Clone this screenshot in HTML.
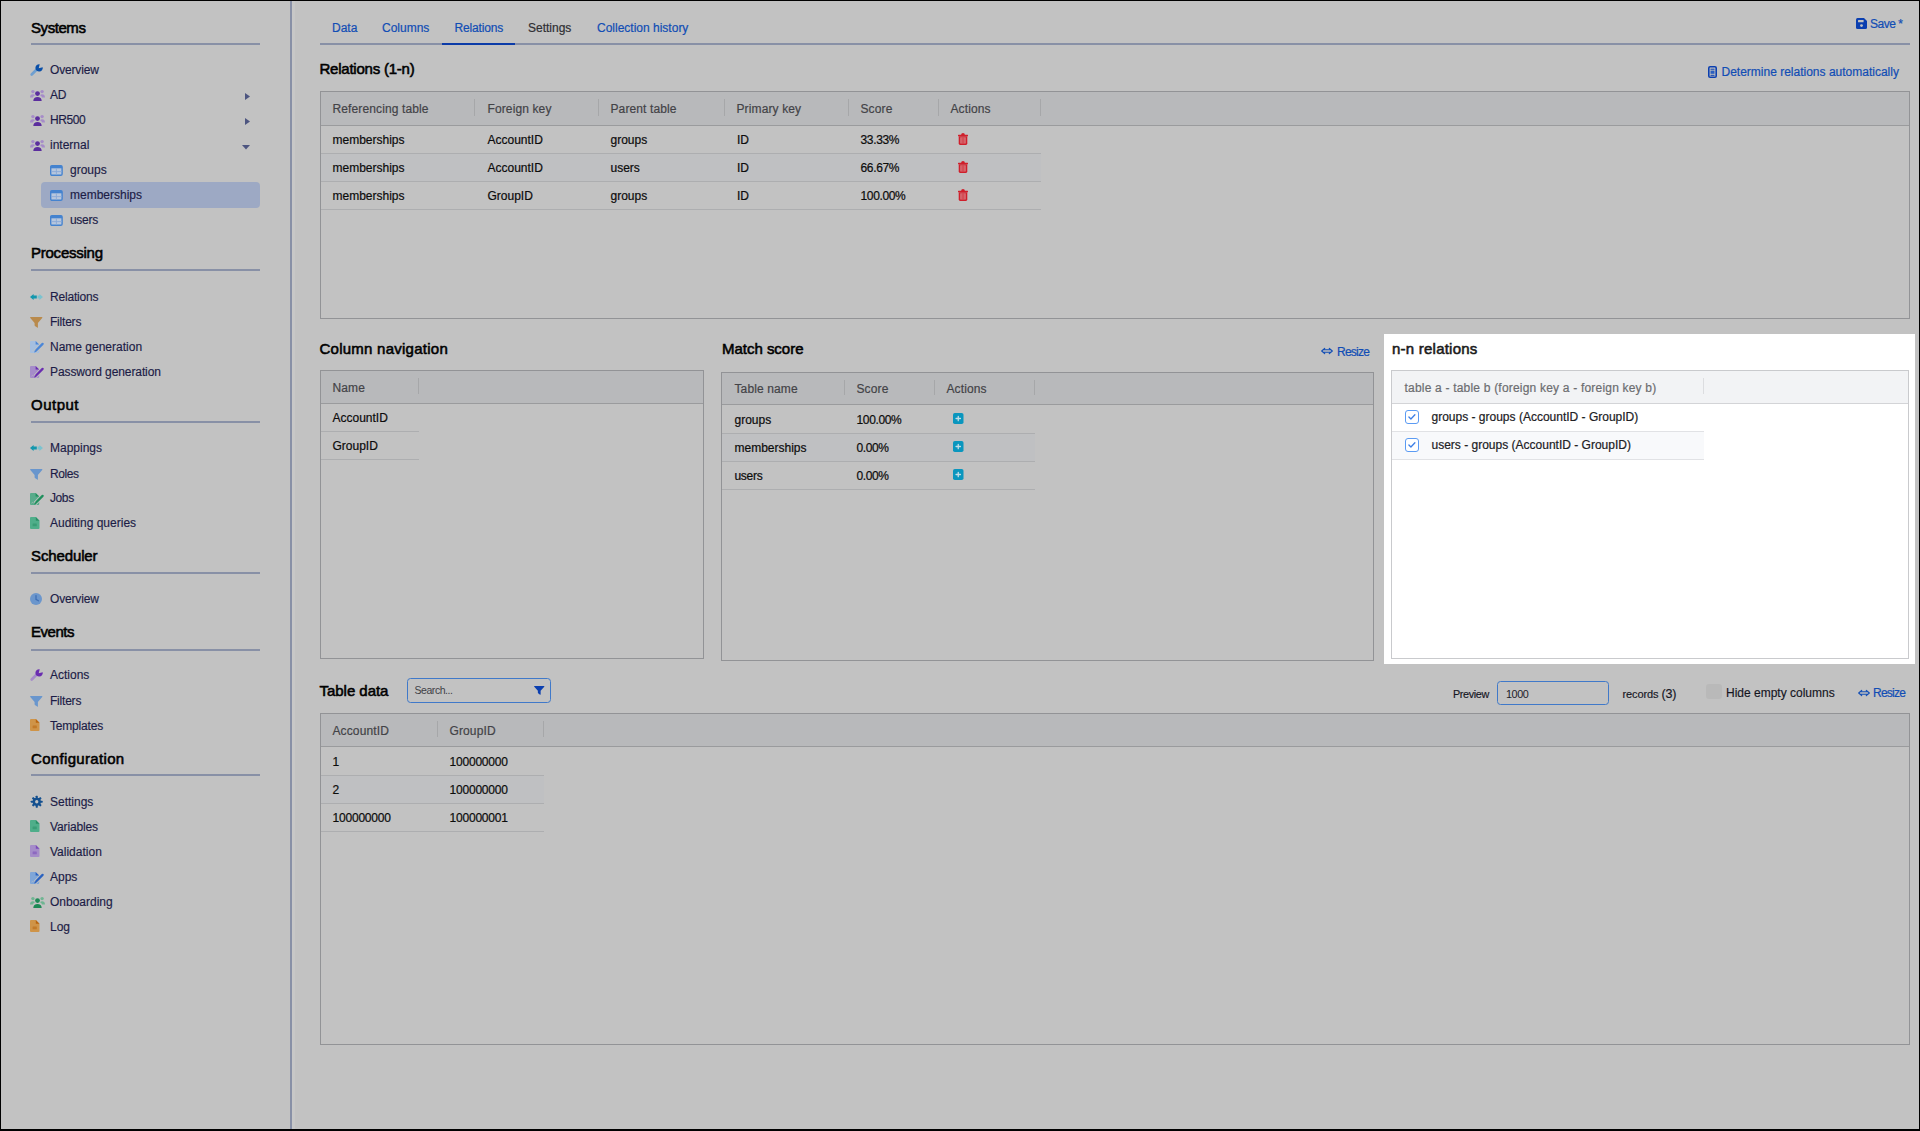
<!DOCTYPE html>
<html lang="en">
<head>
<meta charset="utf-8">
<title>memberships - Relations</title>
<style>
*{box-sizing:border-box}
html,body{margin:0;padding:0}
body{width:1920px;height:1131px;overflow:hidden;position:relative;background:#c2c2c2;font-family:"Liberation Sans",sans-serif;font-size:12px;color:#0c0c0c}
svg{display:block;overflow:visible}
.frame{position:absolute;left:0;top:0;width:1920px;height:1131px;border:1px solid #000;border-bottom-width:2px;z-index:20;pointer-events:none}
/* ---------- sidebar ---------- */
.side{position:absolute;left:0;top:0;width:292px;height:1131px;border-right:2px solid #8890a6}
.side h2{position:absolute;left:31px;margin:0;font-size:15px;font-weight:400;-webkit-text-stroke:.55px;color:#000;line-height:18px;white-space:nowrap}
.split{position:absolute;left:292px;top:1px;width:3px;height:1128px;background:#c7c7c7}
.side hr{position:absolute;left:31px;width:229px;height:2px;border:0;margin:0;background:#8890a6}
.nav{position:absolute;left:31px;width:229px;height:25px;line-height:25px;color:#1c1c46;white-space:nowrap;-webkit-text-stroke:.15px}
.nav .ic{position:absolute;left:0;top:0}
.nav .tx{position:absolute;left:19px;top:0}
.nav.sub{left:41px;width:219px}
.nav.sub .tx{left:29px}
.nav.sel{background:#9da9c4;border-radius:4px;height:26px;line-height:27px}
.nav .car{position:absolute}
/* ---------- main ---------- */
.tabs{position:absolute;left:320px;top:0;width:1590px;height:45px;border-bottom:2px solid #8890a6}
.tab{position:absolute;top:16px;height:29px;line-height:25px;color:#114db5;white-space:nowrap;-webkit-text-stroke:.2px}
.tab.act{border-bottom:2px solid #0b3ba8}
.tab.plain{color:#2f2f33}
.link{position:absolute;color:#114db5;white-space:nowrap;line-height:16px;-webkit-text-stroke:.2px}
.lbl{position:absolute;color:#15151f;white-space:nowrap;line-height:16px;-webkit-text-stroke:.15px}
h3{position:absolute;margin:0;font-size:15px;font-weight:400;-webkit-text-stroke:.55px;color:#000;line-height:18px;white-space:nowrap}
.grid{position:absolute;border:1px solid #929396;background:#c2c2c2}
.grid .hd{position:absolute;left:0;top:0;right:0;background:#b8b9bb;border-bottom:1px solid #9a9b9d}
.grid .th{position:absolute;top:0;height:100%;-webkit-text-stroke:.2px;color:#434347;white-space:nowrap;padding-left:11.5px;letter-spacing:.12px}
.grid .th:after{content:"";position:absolute;right:0;top:7px;bottom:9px;width:1px;background:#a6a7a9}
.row{position:absolute;left:0;height:28px;border-bottom:1px solid #adaeb0}
.row.alt{background:#bfc0c2}
.td{position:absolute;top:0;height:27px;line-height:29px;padding-left:11.5px;white-space:nowrap;color:#0c0c0c;-webkit-text-stroke:.2px}
.td .ic{position:absolute}
.inp{position:absolute;border:1.3px solid #4079c9;border-radius:3.5px;color:#1c1c28;white-space:nowrap}
/* highlighted panel */
.hl{position:absolute;left:1384px;top:334px;width:531px;height:330px;background:#fff}
.hl .grid{border-color:#c9cacd;background:#fff}
.hl .grid .hd{background:#f2f3f5;border-bottom-color:#d3d4d7}
.hl .grid .th{color:#6c6d70}
.hl .grid .th:after{background:#dcdde0}
.hl .row{border-bottom-color:#e1e2e5}
.hl .row.alt{background:#f8f9fb}
.hl .td{color:#202024;line-height:27px}
.cb{position:absolute;left:13px;top:6px;width:14px;height:14px;border:1.4px solid #5b9bf3;border-radius:3px;background:#fff}
</style>
</head>
<body>
<nav class="side">
  <h2 style="top:19px;letter-spacing:-0.43px">Systems</h2><hr style="top:43px">
  <div class="nav" style="top:58px"><svg class="ic" width="13" height="12" viewBox="0 0 13 12" style="left:-1px;top:6px" aria-hidden="true"><path d="M1.7 10.5 L7.2 5" stroke="#6f9fd0" stroke-width="2.7" stroke-linecap="round" fill="none"/><path d="M8.7 4.3 L12.75 3.3 A3.7 3.7 0 1 1 9.7 .25 Z" fill="#0a4fa8"/></svg><span class="tx" style="letter-spacing:-0.16px">Overview</span></div>
  <div class="nav" style="top:83px"><svg class="ic" width="15" height="12" viewBox="0 0 15 12" style="left:-1px;top:6px" aria-hidden="true"><circle cx="2.9" cy="2.6" r="1.7" fill="#a68cc9"/><circle cx="12.1" cy="2.6" r="1.7" fill="#a68cc9"/><path d="M0 8.4C0 6.4 1.2 5.3 2.9 5.3C3.9 5.3 4.6 5.6 5 6.2C3.9 6.8 3.2 7.6 3 8.4Z" fill="#a68cc9"/><path d="M15 8.4C15 6.4 13.8 5.3 12.1 5.3C11.1 5.3 10.4 5.6 10 6.2C11.1 6.8 11.8 7.6 12 8.4Z" fill="#a68cc9"/><circle cx="7.5" cy="4.6" r="2.4" fill="#5b2d9e"/><path d="M3.3 12C3.3 9.4 5 8 7.5 8C10 8 11.7 9.4 11.7 12Z" fill="#5b2d9e"/></svg><span class="tx" style="letter-spacing:-0.26px">AD</span><svg class="car" width="5" height="7" viewBox="0 0 5 7" style="left:214px;top:10px" aria-hidden="true"><path d="M0 0L5 3.5L0 7Z" fill="#4d5580"/></svg></div>
  <div class="nav" style="top:108px"><svg class="ic" width="15" height="12" viewBox="0 0 15 12" style="left:-1px;top:6px" aria-hidden="true"><circle cx="2.9" cy="2.6" r="1.7" fill="#a68cc9"/><circle cx="12.1" cy="2.6" r="1.7" fill="#a68cc9"/><path d="M0 8.4C0 6.4 1.2 5.3 2.9 5.3C3.9 5.3 4.6 5.6 5 6.2C3.9 6.8 3.2 7.6 3 8.4Z" fill="#a68cc9"/><path d="M15 8.4C15 6.4 13.8 5.3 12.1 5.3C11.1 5.3 10.4 5.6 10 6.2C11.1 6.8 11.8 7.6 12 8.4Z" fill="#a68cc9"/><circle cx="7.5" cy="4.6" r="2.4" fill="#5b2d9e"/><path d="M3.3 12C3.3 9.4 5 8 7.5 8C10 8 11.7 9.4 11.7 12Z" fill="#5b2d9e"/></svg><span class="tx" style="letter-spacing:-0.4px">HR500</span><svg class="car" width="5" height="7" viewBox="0 0 5 7" style="left:214px;top:10px" aria-hidden="true"><path d="M0 0L5 3.5L0 7Z" fill="#4d5580"/></svg></div>
  <div class="nav" style="top:133px"><svg class="ic" width="15" height="12" viewBox="0 0 15 12" style="left:-1px;top:6px" aria-hidden="true"><circle cx="2.9" cy="2.6" r="1.7" fill="#a68cc9"/><circle cx="12.1" cy="2.6" r="1.7" fill="#a68cc9"/><path d="M0 8.4C0 6.4 1.2 5.3 2.9 5.3C3.9 5.3 4.6 5.6 5 6.2C3.9 6.8 3.2 7.6 3 8.4Z" fill="#a68cc9"/><path d="M15 8.4C15 6.4 13.8 5.3 12.1 5.3C11.1 5.3 10.4 5.6 10 6.2C11.1 6.8 11.8 7.6 12 8.4Z" fill="#a68cc9"/><circle cx="7.5" cy="4.6" r="2.4" fill="#5b2d9e"/><path d="M3.3 12C3.3 9.4 5 8 7.5 8C10 8 11.7 9.4 11.7 12Z" fill="#5b2d9e"/></svg><span class="tx">internal</span><svg class="car" width="8" height="4.5" viewBox="0 0 8 4.5" style="left:211px;top:11.5px" aria-hidden="true"><path d="M0 0H8L4 4.5Z" fill="#4d5580"/></svg></div>
  <div class="nav sub" style="top:158px"><svg class="ic" width="12.8" height="11" viewBox="0 0 12.8 11" style="left:9.2px;top:6.7px" aria-hidden="true"><rect x=".7" y=".7" width="11.4" height="9.6" rx="1.3" fill="#b7c7dd" stroke="#4583cf" stroke-width="1.4"/><rect x=".7" y=".7" width="11.4" height="2.6" fill="#4583cf"/><path d="M6.4 3.2V10M1 6.6H11.8" stroke="#8aa9d6" stroke-width=".9" fill="none"/></svg><span class="tx">groups</span></div>
  <div class="nav sub sel" style="top:182px"><svg class="ic" width="12.8" height="11" viewBox="0 0 12.8 11" style="left:9.2px;top:7.7px" aria-hidden="true"><rect x=".7" y=".7" width="11.4" height="9.6" rx="1.3" fill="#b7c7dd" stroke="#4583cf" stroke-width="1.4"/><rect x=".7" y=".7" width="11.4" height="2.6" fill="#4583cf"/><path d="M6.4 3.2V10M1 6.6H11.8" stroke="#8aa9d6" stroke-width=".9" fill="none"/></svg><span class="tx">memberships</span></div>
  <div class="nav sub" style="top:208px"><svg class="ic" width="12.8" height="11" viewBox="0 0 12.8 11" style="left:9.2px;top:6.7px" aria-hidden="true"><rect x=".7" y=".7" width="11.4" height="9.6" rx="1.3" fill="#b7c7dd" stroke="#4583cf" stroke-width="1.4"/><rect x=".7" y=".7" width="11.4" height="2.6" fill="#4583cf"/><path d="M6.4 3.2V10M1 6.6H11.8" stroke="#8aa9d6" stroke-width=".9" fill="none"/></svg><span class="tx" style="letter-spacing:-0.3px">users</span></div>
  <h2 style="top:244px;letter-spacing:-0.24px">Processing</h2><hr style="top:269px">
  <div class="nav" style="top:285px"><svg class="ic" width="13" height="6" viewBox="0 0 13 6" style="left:-1px;top:8.5px" aria-hidden="true"><path d="M0 3L3.6 0V1.6H6.8V4.4H3.6V6Z" fill="#1397ad"/><path d="M13 3L9.4 0V1.6H7.5V4.4H9.4V6Z" fill="#7cc3cf"/></svg><span class="tx" style="letter-spacing:-0.19px">Relations</span></div>
  <div class="nav" style="top:310px"><svg class="ic" width="12.5" height="11" viewBox="0 0 12.5 11" style="left:-1px;top:6.5px" aria-hidden="true"><path d="M.7 0H11.8Q12.9 0 12.2 .9L7.9 5.9V10.2Q7.9 11.1 7.2 10.6L4.9 8.9Q4.6 8.7 4.6 8.3V5.9L.3 .9Q-.4 0 .7 0Z" fill="#b98a4c"/></svg><span class="tx" style="letter-spacing:-0.21px">Filters</span></div>
  <div class="nav" style="top:335px"><svg class="ic" width="14" height="12" viewBox="0 0 14 12" style="left:-1px;top:5.5px" aria-hidden="true"><path d="M0 1Q0 0 1 0H5.6L9.2 3.6V11Q9.2 12 8.2 12H1Q0 12 0 11Z" fill="#a5bfe0"/><path d="M5.6 0L9.2 3.6H5.6Z" fill="#4a86d8"/><path d="M4.9 10.6L12.5 3" stroke="#c2c2c2" stroke-width="4" fill="none"/><path d="M6.3 9.2L12.6 2.9" stroke="#4a86d8" stroke-width="2.3" stroke-linecap="round" fill="none"/><path d="M4.2 11.4L4.9 8.9L6.7 10.7Z" fill="#4a86d8"/><path d="M1.5 10.2Q2.4 8.6 3.3 10.2" stroke="#c2c2c2" stroke-width=".8" fill="none" opacity=".7"/></svg><span class="tx">Name generation</span></div>
  <div class="nav" style="top:360px"><svg class="ic" width="14" height="12" viewBox="0 0 14 12" style="left:-1px;top:5.5px" aria-hidden="true"><path d="M0 1Q0 0 1 0H5.6L9.2 3.6V11Q9.2 12 8.2 12H1Q0 12 0 11Z" fill="#a58cc9"/><path d="M5.6 0L9.2 3.6H5.6Z" fill="#6a2db0"/><path d="M4.9 10.6L12.5 3" stroke="#c2c2c2" stroke-width="4" fill="none"/><path d="M6.3 9.2L12.6 2.9" stroke="#6a2db0" stroke-width="2.3" stroke-linecap="round" fill="none"/><path d="M4.2 11.4L4.9 8.9L6.7 10.7Z" fill="#6a2db0"/><path d="M1.5 10.2Q2.4 8.6 3.3 10.2" stroke="#c2c2c2" stroke-width=".8" fill="none" opacity=".7"/></svg><span class="tx" style="letter-spacing:-0.1px">Password generation</span></div>
  <h2 style="top:396px;letter-spacing:0.49px">Output</h2><hr style="top:421px">
  <div class="nav" style="top:436px"><svg class="ic" width="13" height="6" viewBox="0 0 13 6" style="left:-1px;top:8.5px" aria-hidden="true"><path d="M0 3L3.6 0V1.6H6.8V4.4H3.6V6Z" fill="#1397ad"/><path d="M13 3L9.4 0V1.6H7.5V4.4H9.4V6Z" fill="#7cc3cf"/></svg><span class="tx">Mappings</span></div>
  <div class="nav" style="top:462px"><svg class="ic" width="12.5" height="11" viewBox="0 0 12.5 11" style="left:-1px;top:6.5px" aria-hidden="true"><path d="M.7 0H11.8Q12.9 0 12.2 .9L7.9 5.9V10.2Q7.9 11.1 7.2 10.6L4.9 8.9Q4.6 8.7 4.6 8.3V5.9L.3 .9Q-.4 0 .7 0Z" fill="#6996cd"/></svg><span class="tx" style="letter-spacing:-0.4px">Roles</span></div>
  <div class="nav" style="top:486px"><svg class="ic" width="14" height="12" viewBox="0 0 14 12" style="left:-1px;top:6.5px" aria-hidden="true"><path d="M0 1Q0 0 1 0H5.6L9.2 3.6V11Q9.2 12 8.2 12H1Q0 12 0 11Z" fill="#58ab8b"/><path d="M5.6 0L9.2 3.6H5.6Z" fill="#1e8f5c"/><path d="M4.9 10.6L12.5 3" stroke="#c2c2c2" stroke-width="4" fill="none"/><path d="M6.3 9.2L12.6 2.9" stroke="#1e8f5c" stroke-width="2.3" stroke-linecap="round" fill="none"/><path d="M4.2 11.4L4.9 8.9L6.7 10.7Z" fill="#1e8f5c"/><path d="M1.5 10.2Q2.4 8.6 3.3 10.2" stroke="#c2c2c2" stroke-width=".8" fill="none" opacity=".7"/></svg><span class="tx" style="letter-spacing:-0.4px">Jobs</span></div>
  <div class="nav" style="top:511px"><svg class="ic" width="9.5" height="12" viewBox="0 0 9.5 12" style="left:-1px;top:6px" aria-hidden="true"><path d="M0 1Q0 0 1 0H5.8L9.5 3.7V11Q9.5 12 8.5 12H1Q0 12 0 11Z" fill="#4fae8a"/><path d="M5.8 0L9.5 3.7H5.8Z" fill="#2a8f66"/><rect x="2.6" y="6.4" width="4.2" height="2.8" rx=".5" fill="#2a8f66" opacity=".55"/></svg><span class="tx">Auditing queries</span></div>
  <h2 style="top:547px;letter-spacing:-0.12px">Scheduler</h2><hr style="top:572px">
  <div class="nav" style="top:587px"><svg class="ic" width="12" height="12" viewBox="0 0 12 12" style="left:-1px;top:5.5px" aria-hidden="true"><circle cx="6" cy="6" r="6" fill="#6b96cc"/><path d="M6 2.6V6.3L8.4 7.8" stroke="#3f6fb5" stroke-width="1.3" fill="none" stroke-linecap="round"/></svg><span class="tx" style="letter-spacing:-0.16px">Overview</span></div>
  <h2 style="top:623px;letter-spacing:-0.49px">Events</h2><hr style="top:649px">
  <div class="nav" style="top:663px"><svg class="ic" width="13" height="12" viewBox="0 0 13 12" style="left:-1px;top:6px" aria-hidden="true"><path d="M1.7 10.5 L7.2 5" stroke="#a68cc9" stroke-width="2.7" stroke-linecap="round" fill="none"/><path d="M8.7 4.3 L12.75 3.3 A3.7 3.7 0 1 1 9.7 .25 Z" fill="#6a2db0"/></svg><span class="tx">Actions</span></div>
  <div class="nav" style="top:689px"><svg class="ic" width="12.5" height="11" viewBox="0 0 12.5 11" style="left:-1px;top:6.5px" aria-hidden="true"><path d="M.7 0H11.8Q12.9 0 12.2 .9L7.9 5.9V10.2Q7.9 11.1 7.2 10.6L4.9 8.9Q4.6 8.7 4.6 8.3V5.9L.3 .9Q-.4 0 .7 0Z" fill="#6996cd"/></svg><span class="tx" style="letter-spacing:-0.21px">Filters</span></div>
  <div class="nav" style="top:714px"><svg class="ic" width="9.5" height="12" viewBox="0 0 9.5 12" style="left:-1px;top:5px" aria-hidden="true"><path d="M0 1Q0 0 1 0H5.8L9.5 3.7V11Q9.5 12 8.5 12H1Q0 12 0 11Z" fill="#cf9448"/><path d="M5.8 0L9.5 3.7H5.8Z" fill="#b8650f"/><rect x="2.6" y="6.4" width="4.2" height="2.8" rx=".5" fill="#b8650f" opacity=".55"/></svg><span class="tx" style="letter-spacing:-0.19px">Templates</span></div>
  <h2 style="top:750px;letter-spacing:0.33px">Configuration</h2><hr style="top:774px">
  <div class="nav" style="top:790px"><svg class="ic" width="11.5" height="11.5" viewBox="0 0 12 12" style="left:-.5px;top:5.5px" aria-hidden="true"><rect x="4.9" y="-.2" width="2.2" height="3" rx=".5" fill="#14508f" transform="rotate(0 6 6)"/><rect x="4.9" y="-.2" width="2.2" height="3" rx=".5" fill="#14508f" transform="rotate(45 6 6)"/><rect x="4.9" y="-.2" width="2.2" height="3" rx=".5" fill="#14508f" transform="rotate(90 6 6)"/><rect x="4.9" y="-.2" width="2.2" height="3" rx=".5" fill="#14508f" transform="rotate(135 6 6)"/><rect x="4.9" y="-.2" width="2.2" height="3" rx=".5" fill="#14508f" transform="rotate(180 6 6)"/><rect x="4.9" y="-.2" width="2.2" height="3" rx=".5" fill="#14508f" transform="rotate(225 6 6)"/><rect x="4.9" y="-.2" width="2.2" height="3" rx=".5" fill="#14508f" transform="rotate(270 6 6)"/><rect x="4.9" y="-.2" width="2.2" height="3" rx=".5" fill="#14508f" transform="rotate(315 6 6)"/><circle cx="6" cy="6" r="4.3" fill="#14508f"/><circle cx="6" cy="6" r="1.7" fill="#c2c2c2"/></svg><span class="tx">Settings</span></div>
  <div class="nav" style="top:815px"><svg class="ic" width="9.5" height="12" viewBox="0 0 9.5 12" style="left:-1px;top:5px" aria-hidden="true"><path d="M0 1Q0 0 1 0H5.8L9.5 3.7V11Q9.5 12 8.5 12H1Q0 12 0 11Z" fill="#4fae8a"/><path d="M5.8 0L9.5 3.7H5.8Z" fill="#2a8f66"/><rect x="2.6" y="6.4" width="4.2" height="2.8" rx=".5" fill="#2a8f66" opacity=".55"/></svg><span class="tx" style="letter-spacing:-0.13px">Variables</span></div>
  <div class="nav" style="top:840px"><svg class="ic" width="9.5" height="12" viewBox="0 0 9.5 12" style="left:-1px;top:5px" aria-hidden="true"><path d="M0 1Q0 0 1 0H5.8L9.5 3.7V11Q9.5 12 8.5 12H1Q0 12 0 11Z" fill="#a58cc9"/><path d="M5.8 0L9.5 3.7H5.8Z" fill="#7a4bb8"/><rect x="2.6" y="6.4" width="4.2" height="2.8" rx=".5" fill="#7a4bb8" opacity=".55"/></svg><span class="tx">Validation</span></div>
  <div class="nav" style="top:865px"><svg class="ic" width="14" height="12" viewBox="0 0 14 12" style="left:-1px;top:6.5px" aria-hidden="true"><path d="M0 1Q0 0 1 0H5.6L9.2 3.6V11Q9.2 12 8.2 12H1Q0 12 0 11Z" fill="#7fa6d8"/><path d="M5.6 0L9.2 3.6H5.6Z" fill="#2a62c0"/><path d="M4.9 10.6L12.5 3" stroke="#c2c2c2" stroke-width="4" fill="none"/><path d="M6.3 9.2L12.6 2.9" stroke="#2a62c0" stroke-width="2.3" stroke-linecap="round" fill="none"/><path d="M4.2 11.4L4.9 8.9L6.7 10.7Z" fill="#2a62c0"/><path d="M1.5 10.2Q2.4 8.6 3.3 10.2" stroke="#c2c2c2" stroke-width=".8" fill="none" opacity=".7"/></svg><span class="tx">Apps</span></div>
  <div class="nav" style="top:890px"><svg class="ic" width="15" height="12" viewBox="0 0 15 12" style="left:-1px;top:6px" aria-hidden="true"><circle cx="2.9" cy="2.6" r="1.7" fill="#6fb592"/><circle cx="12.1" cy="2.6" r="1.7" fill="#6fb592"/><path d="M0 8.4C0 6.4 1.2 5.3 2.9 5.3C3.9 5.3 4.6 5.6 5 6.2C3.9 6.8 3.2 7.6 3 8.4Z" fill="#6fb592"/><path d="M15 8.4C15 6.4 13.8 5.3 12.1 5.3C11.1 5.3 10.4 5.6 10 6.2C11.1 6.8 11.8 7.6 12 8.4Z" fill="#6fb592"/><circle cx="7.5" cy="4.6" r="2.4" fill="#1d8a56"/><path d="M3.3 12C3.3 9.4 5 8 7.5 8C10 8 11.7 9.4 11.7 12Z" fill="#1d8a56"/></svg><span class="tx">Onboarding</span></div>
  <div class="nav" style="top:915px"><svg class="ic" width="9.5" height="12" viewBox="0 0 9.5 12" style="left:-1px;top:5px" aria-hidden="true"><path d="M0 1Q0 0 1 0H5.8L9.5 3.7V11Q9.5 12 8.5 12H1Q0 12 0 11Z" fill="#cf9448"/><path d="M5.8 0L9.5 3.7H5.8Z" fill="#b8650f"/><rect x="2.6" y="6.4" width="4.2" height="2.8" rx=".5" fill="#b8650f" opacity=".55"/></svg><span class="tx">Log</span></div>
</nav>
<div class="split"></div>
<main>
  <div class="tabs">
    <div class="tab" style="left:12px">Data</div>
    <div class="tab" style="left:62px">Columns</div>
    <div class="tab act" style="left:122px;width:73px;padding-left:12.5px;letter-spacing:-.15px">Relations</div>
    <div class="tab plain" style="left:208px">Settings</div>
    <div class="tab" style="left:277px">Collection history</div>
  </div>
  <svg class="ic" width="11" height="11" viewBox="0 0 11 11" style="position:absolute;left:1856px;top:18px" aria-hidden="true"><path d="M0 1.5Q0 0 1.5 0H8L11 3V9.5Q11 11 9.5 11H1.5Q0 11 0 9.5Z" fill="#0b3fb0"/><rect x="2" y="2" width="5.6" height="2.3" rx=".5" fill="#c2c2c2"/><circle cx="5.5" cy="7.6" r="1.45" fill="#c2c2c2"/></svg><div class="link" style="left:1870px;top:16px;letter-spacing:-.5px">Save *</div>
  <h3 style="left:319.5px;top:60px;letter-spacing:-.23px">Relations (1-n)</h3>
  <svg class="ic" width="9" height="12" viewBox="0 0 9 12" style="position:absolute;left:1708.3px;top:65.8px" aria-hidden="true"><rect x=".8" y=".8" width="7.4" height="10.4" rx="1.3" fill="none" stroke="#0b3fb0" stroke-width="1.6"/><rect x="2.5" y="2.7" width="4" height="1" fill="#0b3fb0"/><rect x="2.5" y="4.6" width="4" height="3.2" fill="#2a5fc0"/><rect x="2.5" y="8.8" width="4" height="1" fill="#0b3fb0"/></svg><div class="link" style="left:1721.5px;top:64px">Determine relations automatically</div>
  <section class="grid" style="left:320px;top:91px;width:1590px;height:228px">
    <div class="hd" style="height:34px;line-height:35px"><div class="th" style="left:0px;width:154px">Referencing table</div><div class="th" style="left:155px;width:123px">Foreign key</div><div class="th" style="left:278px;width:126px">Parent table</div><div class="th" style="left:404px;width:124px">Primary key</div><div class="th" style="left:528px;width:90px">Score</div><div class="th" style="left:618px;width:102px">Actions</div></div>
    <div class="row" style="top:34px;width:720px"><span class="td" style="left:0px">memberships</span><span class="td" style="left:155px">AccountID</span><span class="td" style="left:278px">groups</span><span class="td" style="left:404.5px">ID</span><span class="td" style="left:528px;letter-spacing:-0.35px">33.33%</span><span class="td" style="left:618px"><svg class="ic" width="10" height="12" viewBox="0 0 10 12" style="left:18.7px;top:6.7px" aria-hidden="true"><path d="M3.1 2Q3.1 0 5 0Q6.9 0 6.9 2Z" fill="#cf1f2b"/><rect x="0" y="1.8" width="10" height="1.5" rx=".4" fill="#cf1f2b"/><path d="M.7 3.3H9.3V10.6Q9.3 12 7.9 12H2.1Q.7 12 .7 10.6Z" fill="#cf1f2b"/><rect x="2.4" y="4.3" width="5.2" height="6.2" fill="#d98a8e"/><path d="M4.1 4.3V10.5M5.9 4.3V10.5" stroke="#cf1f2b" stroke-width=".9"/></svg></span></div>
    <div class="row alt" style="top:62px;width:720px"><span class="td" style="left:0px">memberships</span><span class="td" style="left:155px">AccountID</span><span class="td" style="left:278px">users</span><span class="td" style="left:404.5px">ID</span><span class="td" style="left:528px;letter-spacing:-0.35px">66.67%</span><span class="td" style="left:618px"><svg class="ic" width="10" height="12" viewBox="0 0 10 12" style="left:18.7px;top:6.7px" aria-hidden="true"><path d="M3.1 2Q3.1 0 5 0Q6.9 0 6.9 2Z" fill="#cf1f2b"/><rect x="0" y="1.8" width="10" height="1.5" rx=".4" fill="#cf1f2b"/><path d="M.7 3.3H9.3V10.6Q9.3 12 7.9 12H2.1Q.7 12 .7 10.6Z" fill="#cf1f2b"/><rect x="2.4" y="4.3" width="5.2" height="6.2" fill="#d98a8e"/><path d="M4.1 4.3V10.5M5.9 4.3V10.5" stroke="#cf1f2b" stroke-width=".9"/></svg></span></div>
    <div class="row" style="top:90px;width:720px"><span class="td" style="left:0px">memberships</span><span class="td" style="left:155px">GroupID</span><span class="td" style="left:278px">groups</span><span class="td" style="left:404.5px">ID</span><span class="td" style="left:528px;letter-spacing:-0.35px">100.00%</span><span class="td" style="left:618px"><svg class="ic" width="10" height="12" viewBox="0 0 10 12" style="left:18.7px;top:6.7px" aria-hidden="true"><path d="M3.1 2Q3.1 0 5 0Q6.9 0 6.9 2Z" fill="#cf1f2b"/><rect x="0" y="1.8" width="10" height="1.5" rx=".4" fill="#cf1f2b"/><path d="M.7 3.3H9.3V10.6Q9.3 12 7.9 12H2.1Q.7 12 .7 10.6Z" fill="#cf1f2b"/><rect x="2.4" y="4.3" width="5.2" height="6.2" fill="#d98a8e"/><path d="M4.1 4.3V10.5M5.9 4.3V10.5" stroke="#cf1f2b" stroke-width=".9"/></svg></span></div>
  </section>
  <h3 style="left:319.5px;top:340px;letter-spacing:.25px">Column navigation</h3>
  <section class="grid" style="left:320px;top:370px;width:384px;height:289px">
    <div class="hd" style="height:33px;line-height:34px"><div class="th" style="left:0px;width:98px">Name</div></div>
    <div class="row" style="top:33px;width:98px"><span class="td" style="left:0px">AccountID</span></div>
    <div class="row" style="top:61px;width:98px"><span class="td" style="left:0px">GroupID</span></div>
  </section>
  <h3 style="left:722px;top:340px;letter-spacing:-.02px">Match score</h3>
  <svg class="ic" width="12" height="6" viewBox="0 0 12 6" style="position:absolute;left:1321px;top:348px" aria-hidden="true"><path d="M3.7 .4L.7 3L3.7 5.6M8.3 .4L11.3 3L8.3 5.6M2.3 1.75H9.7M2.3 4.25H9.7" fill="none" stroke="#114db5" stroke-width="1.2" stroke-linejoin="round" stroke-linecap="round"/></svg><div class="link" style="left:1337px;top:343.5px;letter-spacing:-.75px">Resize</div>
  <section class="grid" style="left:721px;top:372px;width:653px;height:289px">
    <div class="hd" style="height:32px;line-height:33px"><div class="th" style="left:0px;width:123px"><span style="padding-left:1px">Table name</span></div><div class="th" style="left:123px;width:90px">Score</div><div class="th" style="left:213px;width:100px">Actions</div></div>
    <div class="row" style="top:33px;width:313px"><span class="td" style="left:1px">groups</span><span class="td" style="left:123px;letter-spacing:-0.35px">100.00%</span><span class="td" style="left:213px"><svg class="ic" width="10.5" height="11" viewBox="0 0 10.5 11" style="left:17.8px;top:7px" aria-hidden="true"><rect width="10.5" height="11" rx="1.8" fill="#0a96be"/><path d="M5.25 3.3V7.7M3.05 5.5H7.45" stroke="#c4dde6" stroke-width="1.3" stroke-linecap="round"/></svg></span></div>
    <div class="row alt" style="top:61px;width:313px"><span class="td" style="left:1px">memberships</span><span class="td" style="left:123px;letter-spacing:-0.4px">0.00%</span><span class="td" style="left:213px"><svg class="ic" width="10.5" height="11" viewBox="0 0 10.5 11" style="left:17.8px;top:7px" aria-hidden="true"><rect width="10.5" height="11" rx="1.8" fill="#0a96be"/><path d="M5.25 3.3V7.7M3.05 5.5H7.45" stroke="#c4dde6" stroke-width="1.3" stroke-linecap="round"/></svg></span></div>
    <div class="row" style="top:89px;width:313px"><span class="td" style="left:1px;letter-spacing:-0.3px">users</span><span class="td" style="left:123px;letter-spacing:-0.4px">0.00%</span><span class="td" style="left:213px"><svg class="ic" width="10.5" height="11" viewBox="0 0 10.5 11" style="left:17.8px;top:7px" aria-hidden="true"><rect width="10.5" height="11" rx="1.8" fill="#0a96be"/><path d="M5.25 3.3V7.7M3.05 5.5H7.45" stroke="#c4dde6" stroke-width="1.3" stroke-linecap="round"/></svg></span></div>
  </section>
  <h3 style="left:319.5px;top:682px;letter-spacing:-.03px">Table data</h3>
  <div class="inp" style="left:407px;top:678px;width:144px;height:25px;line-height:22px;padding-left:6.5px;font-size:10.5px;color:#3f3f46;letter-spacing:-.45px">Search...</div><svg class="ic" width="10.5" height="9" viewBox="0 0 10.5 9" style="position:absolute;left:533.7px;top:686px" aria-hidden="true"><path d="M.7 0H11.8Q12.9 0 12.2 .9L7.9 5.9V10.2Q7.9 11.1 7.2 10.6L4.9 8.9Q4.6 8.7 4.6 8.3V5.9L.3 .9Q-.4 0 .7 0Z" fill="#0b3fb0" transform="scale(.84 .82)"/></svg>
  <div class="lbl" style="left:1453px;top:685.5px;font-size:10.8px;letter-spacing:-.35px">Preview</div>
  <div class="inp" style="left:1497px;top:681px;width:111.5px;height:24px;line-height:21px;padding-left:8px;font-size:10.8px;letter-spacing:-.4px;padding-top:1.5px">1000</div>
  <div class="lbl" style="left:1622.5px;top:685.5px;font-size:11px;letter-spacing:-.1px">records <span style="font-size:12.5px">(3)</span></div>
  <div style="position:absolute;left:1706px;top:683.5px;width:16px;height:15.5px;border-radius:3px;background:#b9b9b9"></div>
  <div class="lbl" style="left:1726px;top:684.5px">Hide empty columns</div>
  <svg class="ic" width="12" height="6" viewBox="0 0 12 6" style="position:absolute;left:1857.5px;top:689.5px" aria-hidden="true"><path d="M3.7 .4L.7 3L3.7 5.6M8.3 .4L11.3 3L8.3 5.6M2.3 1.75H9.7M2.3 4.25H9.7" fill="none" stroke="#114db5" stroke-width="1.2" stroke-linejoin="round" stroke-linecap="round"/></svg><div class="link" style="left:1873px;top:685px;letter-spacing:-.75px">Resize</div>
  <section class="grid" style="left:320px;top:713px;width:1590px;height:332px">
    <div class="hd" style="height:33px;line-height:34px"><div class="th" style="left:0px;width:117px">AccountID</div><div class="th" style="left:117px;width:106px">GroupID</div></div>
    <div class="row" style="top:34px;width:223px"><span class="td" style="left:0px">1</span><span class="td" style="left:117px;letter-spacing:-0.2px">100000000</span></div>
    <div class="row alt" style="top:62px;width:223px"><span class="td" style="left:0px">2</span><span class="td" style="left:117px;letter-spacing:-0.2px">100000000</span></div>
    <div class="row" style="top:90px;width:223px"><span class="td" style="left:0px;letter-spacing:-0.2px">100000000</span><span class="td" style="left:117px;letter-spacing:-0.2px">100000001</span></div>
  </section>
  <div class="hl">
  <h3 style="left:8px;top:6px;letter-spacing:.23px;color:#1a1a1a">n-n relations</h3>
  <section class="grid" style="left:7px;top:36px;width:518px;height:289px">
    <div class="hd" style="height:33px;line-height:34px"><div class="th" style="left:0px;width:312px"><span style="letter-spacing:.2px;padding-left:1px">table a - table b (foreign key a - foreign key b)</span></div></div>
    <div class="row" style="top:33px;width:312px"><span class="cb"><svg class="ck" width="14" height="14" viewBox="0 0 14 14" style="position:absolute;left:-1.4px;top:-1.4px" aria-hidden="true"><path d="M3.9 7L5.9 9L9.9 4.7" fill="none" stroke="#3d7fe6" stroke-width="1.3" stroke-linecap="round" stroke-linejoin="round"/></svg></span><span class="td" style="left:28px">groups - groups (AccountID - GroupID)</span></div>
    <div class="row alt" style="top:61px;width:312px"><span class="cb"><svg class="ck" width="14" height="14" viewBox="0 0 14 14" style="position:absolute;left:-1.4px;top:-1.4px" aria-hidden="true"><path d="M3.9 7L5.9 9L9.9 4.7" fill="none" stroke="#3d7fe6" stroke-width="1.3" stroke-linecap="round" stroke-linejoin="round"/></svg></span><span class="td" style="left:28px">users - groups (AccountID - GroupID)</span></div>
  </section>
  </div>
</main>
<div class="frame"></div>
</body>
</html>
